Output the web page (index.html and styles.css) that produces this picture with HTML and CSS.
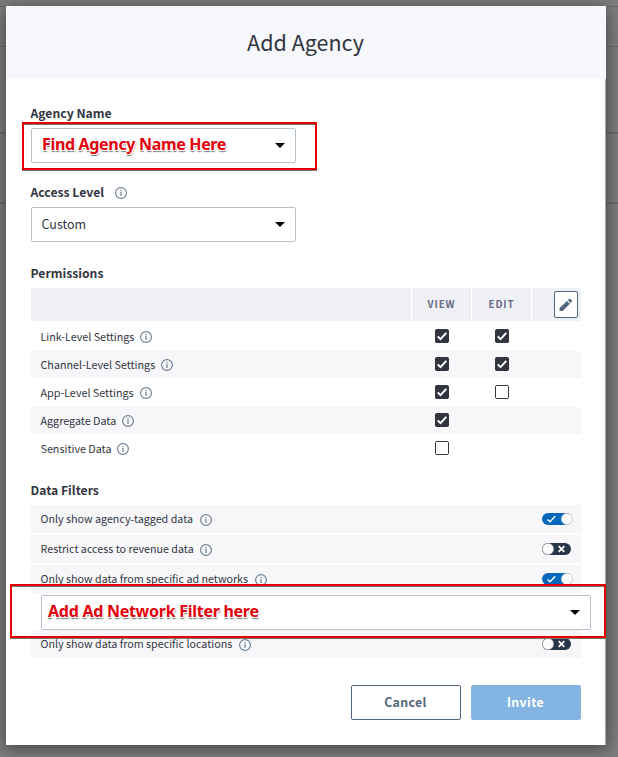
FILE: index.html
```html
<!DOCTYPE html>
<html lang="en">
<head>
<meta charset="utf-8">
<title>Add Agency</title>
<link rel="stylesheet" href="styles.css">
</head>
<body>
<svg class="defs" width="0" height="0" aria-hidden="true">
  <symbol id="info" viewBox="0 0 12 12"><circle cx="6" cy="6" r="5.4" fill="none" stroke="#6c7f94" stroke-width="1.15"/><path d="M6 5.1V9M6 3V4.2" stroke="#6c7f94" stroke-width="1.2"/></symbol>
  <symbol id="check" viewBox="0 0 14 14"><rect width="14" height="14" rx="1.7" fill="#32353f"/><path d="M2.7 7.4 5.5 10.1 11.3 3.9" fill="none" stroke="#fff" stroke-width="2"/></symbol>
  <symbol id="box" viewBox="0 0 14 14"><rect x=".5" y=".5" width="13" height="13" rx="1.4" fill="#fff" stroke="#32353f"/></symbol>
  <symbol id="on" viewBox="0 0 31 12"><rect width="30" height="12" rx="6" fill="#0868bd"/><path d="M5.5 6.4 8 8.7 13.2 3.2" fill="none" stroke="#fff" stroke-width="1.4"/><circle cx="25" cy="6" r="5.7" fill="#fafafb" stroke="#b9bbc0" stroke-width=".6"/></symbol>
  <symbol id="off" viewBox="0 0 31 12"><rect width="29" height="12" rx="6" fill="#28364a"/><path d="M16.7 3.1 22.3 8.9M22.3 3.1 16.7 8.9" stroke="#fff" stroke-width="1.7"/><circle cx="6" cy="6" r="5.7" fill="#fafafb" stroke="#999" stroke-width=".6"/></symbol>
</svg>
<div class="rule r1"></div><div class="rule r2"></div><div class="rule r3"></div><div class="rule r4"></div>
<main class="modal">
  <header class="head"><h1>Add Agency</h1></header>
  <div class="body">
    <div class="label name"><span>Agency Name</span></div>
    <div class="select first"><span class="note note-a">Find Agency Name Here</span><i class="caret"></i><div class="mark mark-a"></div></div>
    <div class="label access"><span>Access Level</span><svg class="info"><use href="#info"/></svg></div>
    <div class="select"><span class="value">Custom</span><i class="caret"></i></div>
    <div class="label perms"><span>Permissions</span></div>
    <div class="grid thead"><div></div><div class="th">VIEW</div><div class="th">EDIT</div><div class="tool"><button class="pencil" aria-label="Edit"><svg width="14" height="14" viewBox="0 0 14 14"><path d="M.6 10.1 8 2.9 10.9 5.7 3.6 13H.6ZM8.8 2.1 10.1.9Q10.8.4 11.4.9L12.9 2.4Q13.4 3 12.9 3.6L11.7 4.9Z" fill="#51657c"/></svg></button></div></div>
    <div class="rows">
      <div class="grid row"><div class="cell"><span>Link-Level Settings</span><svg class="info"><use href="#info"/></svg></div><svg class="cb"><use href="#check"/></svg><svg class="cb"><use href="#check"/></svg></div>
      <div class="grid row alt"><div class="cell"><span>Channel-Level Settings</span><svg class="info"><use href="#info"/></svg></div><svg class="cb"><use href="#check"/></svg><svg class="cb"><use href="#check"/></svg></div>
      <div class="grid row"><div class="cell"><span>App-Level Settings</span><svg class="info"><use href="#info"/></svg></div><svg class="cb"><use href="#check"/></svg><svg class="cb"><use href="#box"/></svg></div>
      <div class="grid row alt"><div class="cell"><span>Aggregate Data</span><svg class="info"><use href="#info"/></svg></div><svg class="cb"><use href="#check"/></svg></div>
      <div class="grid row"><div class="cell"><span>Sensitive Data</span><svg class="info"><use href="#info"/></svg></div><svg class="cb"><use href="#box"/></svg></div>
    </div>
    <div class="label filters"><span>Data Filters</span></div>
    <div class="filter"><span>Only show agency-tagged data</span><svg class="info"><use href="#info"/></svg><svg class="toggle"><use href="#on"/></svg></div>
    <div class="filter"><span>Restrict access to revenue data</span><svg class="info"><use href="#info"/></svg><svg class="toggle"><use href="#off"/></svg></div>
    <div class="filter"><span>Only show data from specific ad networks</span><svg class="info"><use href="#info"/></svg><svg class="toggle"><use href="#on"/></svg></div>
    <div class="select wide"><span class="note note-b">Add Ad Network Filter here</span><i class="caret"></i><div class="mark mark-b"></div></div>
    <div class="filter"><span>Only show data from specific locations</span><svg class="info"><use href="#info"/></svg><svg class="toggle"><use href="#off"/></svg></div>
    <div class="actions"><button class="btn">Cancel</button><button class="btn primary">Invite</button></div>
  </div>
</main>
</body>
</html>
```
FILE: styles.css
```css
* { box-sizing: border-box; }
body {
  margin: 0;
  width: 618px;
  height: 757px;
  padding: 6px;
  overflow: hidden;
  position: relative;
  background: #7d7d7d;
  color: #32353f;
  font-family: "Noto Sans CJK JP", "Noto Sans", sans-serif;
}
.defs { position: absolute; }
.rule { position: absolute; left: 0; width: 618px; height: 1px; background: #6a6a6a; }
.r1 { top: 6px; }
.r2 { top: 46px; }
.r3 { top: 132px; height: 2px; }
.r4 { top: 202px; height: 2px; }
.modal {
  position: relative;
  width: 600px;
  height: 739px;
  background: #fff;
  box-shadow: 0 3px 16px rgba(0, 0, 0, .5);
}
.head {
  height: 73px;
  display: flex;
  align-items: center;
  justify-content: center;
  padding: 0 1px 2px 0;
  background: #f7f8fc;
}
h1 { margin: 0; font-size: 21.5px; line-height: 30px; font-weight: 400; white-space: nowrap; }
.body { height: 666px; padding: 25px 24px 0 25px; border-right: 1px solid #a5a5a5; }
.label { display: flex; align-items: center; font-size: 12.2px; font-weight: 700; line-height: 20px; height: 20px; }
.label span { margin-left: -.5px; }
.name { margin-bottom: 4px; }
.name span, .access span { margin-top: -2px; }
.access { margin-top: 20px; margin-bottom: 4px; }
.access .info { margin-left: 11px; }
.perms { margin-top: 21px; margin-bottom: 5px; }
.filters { margin-top: 18px; margin-bottom: 5px; }
.info { width: 12px; height: 12px; flex: none; }
.select {
  position: relative;
  width: 265px;
  height: 35px;
  display: flex;
  align-items: center;
  border: 1px solid #b8c2cf;
  border-radius: 2px;
  padding: 0 10px;
  background: #fff;
}
.value { font-size: 12.5px; line-height: 20px; margin: -2px 0 0 -.5px; }
.caret { width: 10px; height: 5px; margin-left: auto; background: #000; clip-path: polygon(0 0, 100% 0, 50% 100%); }
.note {
  font-family: "Noto Sans", sans-serif;
  font-weight: 700;
  font-size: 16px;
  line-height: 22px;
  white-space: nowrap;
  color: #e3000b;
  text-shadow: -1px 0 #fff, 1px 0 #fff, 0 -1px #fff, 0 1px #fff, -1px 1px #fff, 1px 1px #fff, 0 2px 1px #888, 1px 2px 1px #888;
}
.note-a { margin-top: -3px; letter-spacing: -.33px; }
.note-b { margin: -3px 0 0 -4px; letter-spacing: -.27px; }
.mark { position: absolute; border: 2px solid #e60000; box-shadow: 0 1px #777, inset 0 1px #777; }
.mark-a { left: -10px; top: -7px; width: 295px; height: 48px; }
.mark-b { left: -32px; top: -12px; width: 596px; height: 54px; }
.grid { display: grid; grid-template-columns: 380px 59px 59px 49px; column-gap: 1px; align-items: center; }
.thead { height: 33px; align-items: stretch; }
.thead > div { background: #eff0f6; display: flex; align-items: center; justify-content: center; }
.thead > .th { font-size: 9.8px; font-weight: 700; letter-spacing: .9px; color: #676b84; padding-bottom: 2px; }
.thead .tool { justify-content: flex-end; padding-right: 3px; }
.pencil { width: 24px; height: 27px; padding: 0; border: 1px solid #51657c; border-radius: 2px; background: #fff; display: grid; place-items: center; }
.rows { padding-top: 2px; }
.row { height: 27px; margin-bottom: 1px; padding-bottom: 1px; }
.alt { background: #f7f7fa; }
.cell { display: flex; align-items: center; padding-left: 9.5px; font-size: 10.75px; line-height: 18px; }
.cell span { margin-top: 1px; }
.cell .info { margin: 1px 0 0 6px; }
.cb { width: 14px; height: 14px; justify-self: center; }
.filter { height: 28px; margin-bottom: 2px; padding: 0 8px 0 9.5px; display: flex; align-items: center; background: #f7f7fa; font-size: 10.72px; line-height: 18px; }
.filter .info { margin: 1px 0 0 6.5px; }
.toggle { width: 31px; height: 12px; margin-left: auto; }
.wide { width: 550px; margin-left: 10px; margin-bottom: 0; }
.actions { display: flex; gap: 10px; justify-content: flex-end; margin-top: 27px; }
.btn { width: 110px; height: 35px; padding: 0 1px 2px 0; border: 1px solid #51657c; border-radius: 2px; background: #fff; color: #51657c; font-family: inherit; font-size: 12.3px; font-weight: 700; letter-spacing: .4px; }
.primary { background: #84b5e2; border-color: #84b5e2; color: #fff; }
```
